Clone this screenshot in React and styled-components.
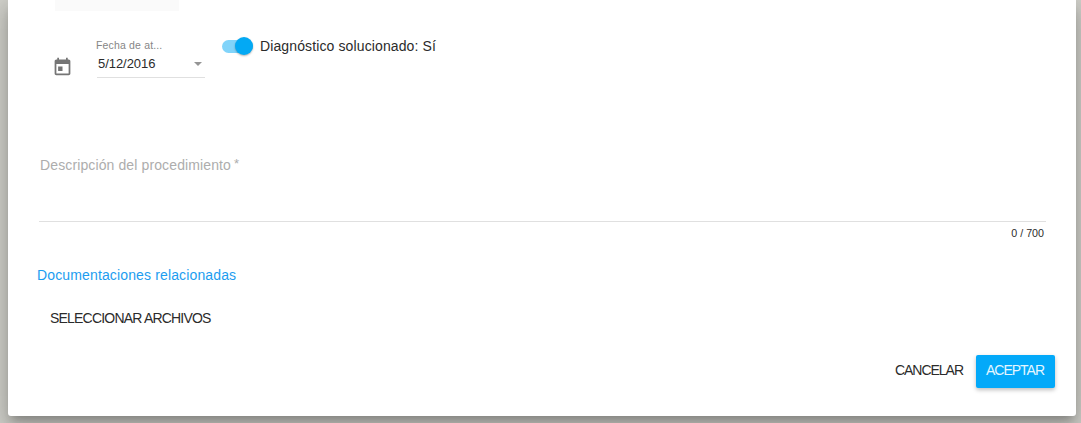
import React from 'react';
import styled, { createGlobalStyle } from 'styled-components';

const Global = createGlobalStyle`
  * { box-sizing: border-box; }
  body {
    margin: 0;
    height: 423px;
    overflow: hidden;
    background: #d0d0ca;
    font-family: "Liberation Sans", Arial, sans-serif;
    font-size: 14px;
    letter-spacing: 0.12px;
    color: #2b2b2b;
  }
`;

const Dialog = styled.main`
  display: flex;
  flex-direction: column;
  width: 1068px;
  height: 416px;
  margin-left: 8px;
  background: #fff;
  border-radius: 0 0 3px 3px;
  box-shadow: 0 7px 8px -4px rgba(0, 0, 0, 0.2), 0 13px 19px 2px rgba(0, 0, 0, 0.14),
    0 5px 24px 4px rgba(0, 0, 0, 0.12);
`;

const Chip = styled.div`
  flex: none;
  width: 124px;
  height: 11px;
  margin-left: 47px;
  background: #fafafa;
`;

const Row = styled.div`
  display: flex;
  align-items: flex-start;
  height: 145px;
  padding: 25px 0 0 44px;
`;

const CalendarIcon = styled.svg`
  width: 21px;
  height: 21px;
  margin-top: 20px;
  fill: #757575;
`;

const DateField = styled.div`
  width: 108px;
  height: 42px;
  margin-left: 24px;
  border-bottom: 1px solid #e0e0e0;
`;

const FieldLabel = styled.div`
  height: 19px;
  margin-left: -1px;
  padding-top: 3px;
  font-size: 10.5px;
  line-height: 12px;
  letter-spacing: 0.16px;
  color: #868686;
`;

const DateValue = styled.div`
  display: flex;
  align-items: center;
  justify-content: space-between;
  height: 16px;
  padding: 0 3px 0 1px;
  font-size: 13px;
  letter-spacing: -0.05px;
`;

const Caret = styled.i`
  margin-top: 2px;
  border: 4px solid transparent;
  border-top-color: #959595;
  border-bottom-width: 0;
`;

const Switch = styled.div`
  display: flex;
  align-items: center;
  width: 31px;
  height: 20px;
  margin-left: 17px;
`;

const Track = styled.div`
  display: flex;
  align-items: center;
  justify-content: flex-end;
  width: 31px;
  height: 13px;
  border-radius: 7px;
  background: #81d4fa;
`;

const Thumb = styled.div`
  flex: none;
  width: 18px;
  height: 18px;
  border-radius: 50%;
  background: #03a9f4;
  box-shadow: 0 1px 2px rgba(0, 0, 0, 0.3);
`;

const SwitchLabel = styled.span`
  margin-left: 7px;
  line-height: 20px;
`;

const TextArea = styled.div`
  width: 1007px;
  height: 66px;
  margin-left: 31px;
  padding-left: 1px;
  line-height: 18px;
  color: #adadad;
  border-bottom: 1px solid #e0e0e0;
`;

const Required = styled.sup`
  margin-left: 3px;
  font-size: 13px;
  line-height: 0;
  vertical-align: 2px;
`;

const Counter = styled.div`
  height: 42px;
  padding: 5px 32px 0 0;
  font-size: 10.7px;
  line-height: 13px;
  letter-spacing: 0;
  text-align: right;
`;

const Heading = styled.h2`
  height: 38px;
  margin: 0 0 0 29px;
  padding-top: 2px;
  font-size: 14px;
  font-weight: 400;
  line-height: 18px;
  letter-spacing: 0.14px;
  color: #1c9df0;
`;

const Button = styled.button`
  height: 33px;
  padding: 0 10px 3px;
  border: 0;
  border-radius: 2px;
  background: ${(p) => (p.$primary ? '#03a9f9' : 'transparent')};
  box-shadow: ${(p) => (p.$primary ? '0 2px 4px rgba(0, 0, 0, 0.26)' : 'none')};
  color: ${(p) => (p.$primary ? '#e5f6ff' : '#2b2b2b')};
  font: 400 14px "Liberation Sans", Arial, sans-serif;
  letter-spacing: ${(p) => p.$tracking}px;
  white-space: nowrap;
`;

const FileRow = styled.div`
  height: 33px;
  margin-left: 32px;

  ${Button} {
    padding-bottom: 1px;
  }
`;

const Actions = styled.footer`
  display: flex;
  justify-content: flex-end;
  gap: 3px;
  margin-top: 20px;
  padding-right: 21px;

  ${Button}:last-child {
    width: 79px;
    padding-left: 9px;
  }
`;

export default function App() {
  return (
    <>
      <Global />
      <Dialog>
        <Chip />
        <Row>
          <CalendarIcon viewBox="0 0 24 24">
            <path d="M7 12h5v5H7zM19 4h-1V2h-2v2H8V2H6v2H5c-1.1 0-2 .9-2 2v14c0 1.1.9 2 2 2h14c1.1 0 2-.9 2-2V6c0-1.1-.9-2-2-2zm0 16H5V9h14v11z" />
          </CalendarIcon>
          <DateField>
            <FieldLabel>Fecha de at...</FieldLabel>
            <DateValue>
              5/12/2016
              <Caret />
            </DateValue>
          </DateField>
          <Switch>
            <Track>
              <Thumb />
            </Track>
          </Switch>
          <SwitchLabel>Diagnóstico solucionado: Sí</SwitchLabel>
        </Row>
        <TextArea>
          Descripción del procedimiento<Required>*</Required>
        </TextArea>
        <Counter>0 / 700</Counter>
        <Heading>Documentaciones relacionadas</Heading>
        <FileRow>
          <Button $tracking={-0.8}>SELECCIONAR ARCHIVOS</Button>
        </FileRow>
        <Actions>
          <Button $tracking={-1.02}>CANCELAR</Button>
          <Button $primary $tracking={-1}>ACEPTAR</Button>
        </Actions>
      </Dialog>
    </>
  );
}
